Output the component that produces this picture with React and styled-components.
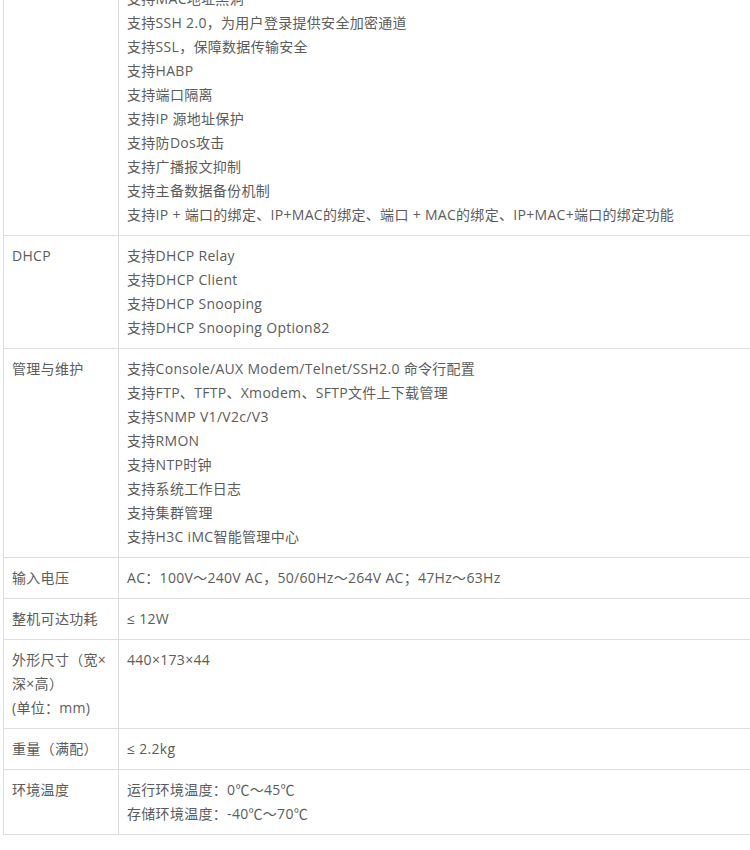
import React from 'react';
import styled, { createGlobalStyle } from 'styled-components';

const GlobalStyle = createGlobalStyle`
    html, body {
        margin: 0;
        padding: 0;
        background: #fff;
    }
    body {
        font-family: "Open Sans", "Noto Sans CJK SC", sans-serif;
        font-size: 14px;
        color: #5c5c5c;
        letter-spacing: 0.3px;
    }
`;

const Page = styled.div`
    width: 750px;
    height: 850px;
    overflow: hidden;
    padding-left: 3px;
    box-sizing: border-box;
`;

const SpecTable = styled.table`
    width: 770px;
    margin-top: -94px;
    border-collapse: collapse;
    table-layout: fixed;
`;

const LabelCell = styled.td`
    width: 98px;
    padding: 8px;
    vertical-align: top;
    line-height: 24px;
    border: 1px solid #ddd;
`;

const ValueCell = styled.td`
    padding: 8px;
    vertical-align: top;
    line-height: 24px;
    border: 1px solid #ddd;
`;

const Line = styled.div`
    white-space: nowrap;
`;

const specs = [
    {
        label: '安全特性',
        items: [
            '支持AAA认证',
            '支持802.1X认证',
            '支持Radius认证',
            '支持MAC地址黑洞',
            '支持SSH 2.0，为用户登录提供安全加密通道',
            '支持SSL，保障数据传输安全',
            '支持HABP',
            '支持端口隔离',
            '支持IP 源地址保护',
            '支持防Dos攻击',
            '支持广播报文抑制',
            '支持主备数据备份机制',
            '支持IP + 端口的绑定、IP+MAC的绑定、端口 + MAC的绑定、IP+MAC+端口的绑定功能'
        ]
    },
    {
        label: 'DHCP',
        items: [
            '支持DHCP Relay',
            '支持DHCP Client',
            '支持DHCP Snooping',
            '支持DHCP Snooping Option82'
        ]
    },
    {
        label: '管理与维护',
        items: [
            '支持Console/AUX Modem/Telnet/SSH2.0 命令行配置',
            '支持FTP、TFTP、Xmodem、SFTP文件上下载管理',
            '支持SNMP V1/V2c/V3',
            '支持RMON',
            '支持NTP时钟',
            '支持系统工作日志',
            '支持集群管理',
            '支持H3C iMC智能管理中心'
        ]
    },
    {
        label: '输入电压',
        items: ['AC：100V～240V AC，50/60Hz～264V AC；47Hz～63Hz']
    },
    {
        label: '整机可达功耗',
        items: ['≤ 12W']
    },
    {
        label: ['外形尺寸（宽×', '深×高）', '(单位：mm)'],
        items: ['440×173×44']
    },
    {
        label: '重量（满配）',
        items: ['≤ 2.2kg']
    },
    {
        label: '环境温度',
        items: ['运行环境温度：0℃～45℃', '存储环境温度：-40℃～70℃']
    }
];

export default function App() {
    return (
        <Page>
            <GlobalStyle />
            <SpecTable>
                <tbody>
                    {specs.map((row, i) => (
                        <tr key={i}>
                            <LabelCell>
                                {Array.isArray(row.label)
                                    ? row.label.map((l, j) => <Line key={j}>{l}</Line>)
                                    : row.label}
                            </LabelCell>
                            <ValueCell>
                                {row.items.map((item, j) => (
                                    <Line key={j}>{item}</Line>
                                ))}
                            </ValueCell>
                        </tr>
                    ))}
                </tbody>
            </SpecTable>
        </Page>
    );
}
